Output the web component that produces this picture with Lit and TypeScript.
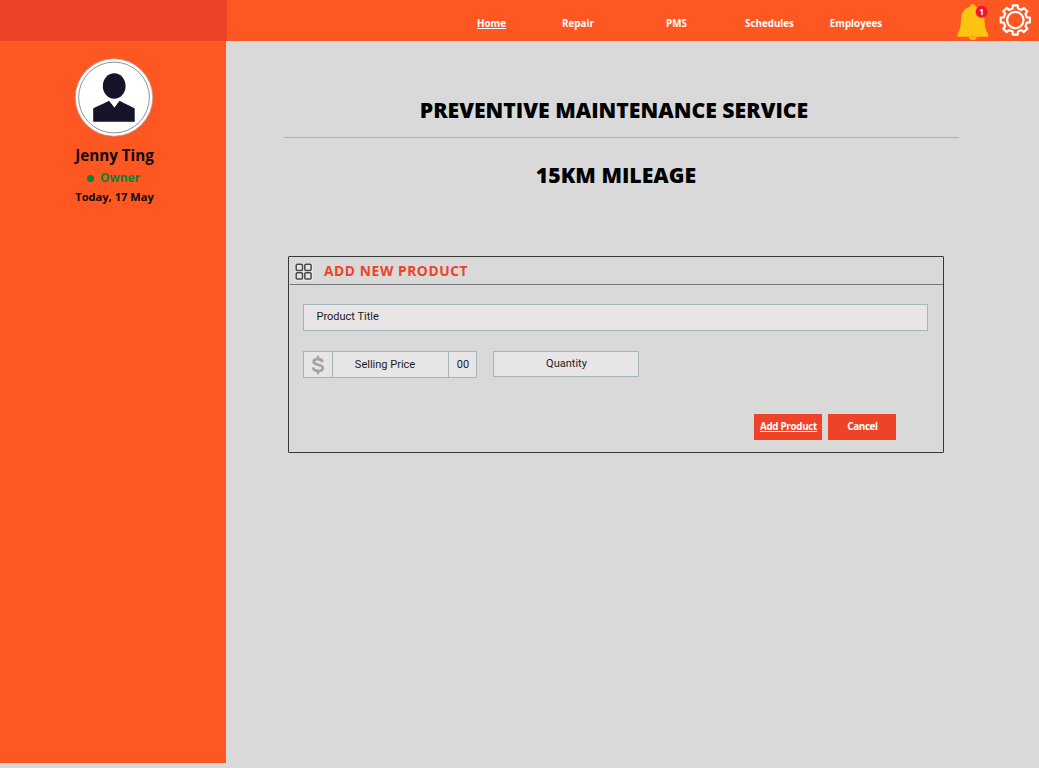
import { LitElement, html, svg, css } from "lit";
import { customElement, state } from "lit/decorators.js";
import { classMap } from "lit/directives/class-map.js";

const gearPath = (teeth: number, outer: number, root: number): string => {
  const step = (Math.PI * 2) / teeth;
  const points: string[] = [];
  for (let i = 0; i < teeth; i++) {
    const a = i * step - Math.PI / 2;
    for (const [offset, r] of [[-0.29, root], [-0.21, outer], [0.21, outer], [0.29, root]]) {
      const t = a + offset * step;
      points.push(`${(r * Math.cos(t)).toFixed(2)} ${(r * Math.sin(t)).toFixed(2)}`);
    }
  }
  return `M${points.join("L")}Z`;
};

@customElement("top-bar")
class TopBar extends LitElement {
  @state() private active = "Home";

  static styles = css`
    :host { display: flex; height: 41px; background: #ff5722; }
    .brand { width: 227px; background: #ee4326; border-right: 1px solid #f9592f; flex: none; }
    .nav {
      display: grid; grid-template-columns: 87px 86px 111px 75px 98px;
      margin-left: 220px; width: 457px; flex: none;
    }
    .link {
      text-align: center; color: #fff; font-weight: 700; font-size: 9.8px;
      line-height: 14px; padding-top: 17px; cursor: pointer;
    }
    .active { text-decoration: underline; }
    .icons { flex: none; width: 134px; height: 41px; display: block; }
    .count { font: 700 9px "Open Sans", sans-serif; fill: #fff; text-anchor: middle; }
  `;

  render() {
    return html`
      <div class="brand"></div>
      <nav class="nav">
        ${["Home", "Repair", "PMS", "Schedules", "Employees"].map(
          (name) => html`<a
            class=${classMap({ link: true, active: name === this.active })}
            @click=${() => (this.active = name)}
            >${name}</a
          >`
        )}
      </nav>
      <svg class="icons" viewBox="905 0 134 41">
        <path
          fill="#ffc412"
          d="M972.8 4.3c1.8 0 2.7 1.2 2.9 2.4 5.2 1.5 8.2 5.8 8.6 11.2.4 6 .4 10.8 2.6 14 1 1.4 1.3 2.600 1.2 4.900H957.300c-.1-2.300.3-3.500 1.200-4.900 2.200-3.200 2.200-8 2.600-14 .4-5.400 3.500-9.700 8.800-11.200.2-1.200 1.100-2.400 2.900-2.400Z"
        />
        <path fill="#ffc412" d="M968.800 37.200h8c-.4 1.700-2 2.900-4 2.900s-3.600-1.200-4-2.900Z" />
        <circle cx="981.600" cy="11.700" r="6" fill="#fb1031" />
        <text class="count" x="981.600" y="15">1</text>
        <g transform="translate(1015.300 20)" fill="none" stroke="#fff" stroke-width="2.200" stroke-linejoin="round">
          <path d=${gearPath(8, 14.8, 11.9)} />
          <circle r="8.200" />
        </g>
      </svg>
    `;
  }
}

@customElement("side-profile")
class SideProfile extends LitElement {
  static styles = css`
    :host {
      display: flex; flex-direction: column; align-items: center; box-sizing: border-box;
      width: 226px; height: 722px; flex: none; background: #ff5722; padding: 17px 0 0 3px;
      font-weight: 700; color: #0a0a0a;
    }
    .avatar { width: 80px; height: 80px; display: block; margin-right: 1px; }
    .name { font-size: 15.2px; line-height: 20px; margin-top: 7px; }
    .role {
      display: flex; align-items: center; gap: 6px; color: #0b8235;
      font-size: 12px; line-height: 16px; margin: 5px 2px 0 0;
    }
    .dot { width: 7px; height: 7px; border-radius: 50%; background: #0b8235; }
    .date { font-size: 11.1px; line-height: 15px; margin-top: 3px; }
  `;

  render() {
    return html`
      <svg class="avatar" viewBox="0 0 80 80">
        <circle cx="40" cy="39.500" r="38.700" fill="#fff" stroke="#b9a59e" stroke-width=".7" />
        <circle cx="40" cy="39.500" r="35.400" fill="none" stroke="#77777c" stroke-width=".8" />
        <g fill="#17142a">
          <ellipse cx="40.200" cy="28" rx="11.400" ry="12.800" />
          <path d="M19.200 63.700V50.500c2.500-1.500 11-4.900 15.800-7.700l5.400 6.700 5.200-6.700c4.900 2.800 12.500 6 15.100 7.700v13.200Z" />
        </g>
        <path d="m36.500 42.500 4 7 3.500-7-3.500-.8Z" fill="#fff" />
      </svg>
      <div class="name">Jenny Ting</div>
      <div class="role"><span class="dot"></span>Owner</div>
      <div class="date">Today, 17 May</div>
    `;
  }
}

@customElement("product-form")
class ProductForm extends LitElement {
  static styles = css`
    :host {
      display: block; box-sizing: border-box; width: 656px; height: 197px;
      margin: 66px 0 0 62px; border: 1px solid #383838; border-radius: 1px;
    }
    .head {
      display: flex; align-items: center; height: 27px; padding-left: 5px;
      border-bottom: 1px solid #777; margin-left: 1px;
    }
    .grid { width: 18px; height: 18px; display: block; margin-top: 2px; }
    .title {
      margin-left: 11px; color: #ee4326; font-size: 13.8px; font-weight: 700;
      line-height: 18px; white-space: nowrap; letter-spacing: 0.57px;
    }
    .field {
      box-sizing: border-box; height: 27px; border: 1px solid #a4b4ba; background: #e7e5e6;
      color: #1c1c1c; font: 11px/15px Roboto, sans-serif; white-space: nowrap;
    }
    .name { margin: 19px 0 0 14px; width: 625px; padding: 4px 0 0 12.5px; }
    .row { display: flex; margin: 20px 0 0 14px; }
    .price { display: flex; width: 174px; }
    .cell { display: flex; align-items: center; justify-content: center; box-sizing: border-box; }
    .currency { width: 28px; padding-right: 1px; }
    .amount { width: 117px; padding-right: 11px; border: solid #a4b4ba; border-width: 0 1px; }
    .cents { width: 27px; padding-left: 1px; }
    .quantity { width: 146px; height: 26px; margin-left: 16px; text-align: center; padding: 4px 0 0 1px; }
    .dollar { width: 14px; height: 20px; display: block; }
    .actions { display: flex; gap: 6px; margin: 36px 0 0 465px; }
    .button {
      width: 68px; height: 26px; border: 0; padding: 0 0 0 1px; background: #ee4326; color: #fff;
      font: 700 9.8px/26px "Open Sans", sans-serif; letter-spacing: -0.3px; white-space: nowrap;
    }
    .primary { text-decoration: underline; }
  `;

  render() {
    return html`
      <div class="head">
        <svg class="grid" viewBox="0 0 18 18">
          <rect width="18" height="18" fill="#ebebeb" />
          ${[[1.2, 1.2], [9.8, 1.2], [1.2, 9.8], [9.8, 9.8]].map(
            ([x, y]) => svg`<rect x=${x} y=${y} width="6.300" height="6.300" rx="1" fill="#e2e2e2" stroke="#484848" stroke-width="1.500" />`
          )}
        </svg>
        <span class="title">ADD NEW PRODUCT</span>
      </div>
      <div class="field name">Product Title</div>
      <div class="row">
        <div class="field price">
          <span class="cell currency">
            <svg class="dollar" viewBox="0 0 14 20" fill="none" stroke="#a3a3a3">
              <path stroke-width="2.700" d="M11.500 7.200C11.200 5.100 9.500 4.100 7 4.100c-2.600 0-4.300 1-4.300 2.700C2.700 8.700 4.600 9.200 7 9.700c2.700.6 4.800 1.200 4.800 3.200 0 1.900-1.800 2.900-4.700 2.900-2.800 0-4.700-1.200-4.900-3.400" />
              <path stroke-width="2.400" d="M7 .8v4M7 15.200v4" />
            </svg>
          </span>
          <span class="cell amount">Selling Price</span>
          <span class="cell cents">00</span>
        </div>
        <div class="field quantity">Quantity</div>
      </div>
      <div class="actions">
        <button class="button primary">Add Product</button>
        <button class="button">Cancel</button>
      </div>
    `;
  }
}

@customElement("app-root")
class AppRoot extends LitElement {
  static styles = css`
    :host {
      display: block; height: 768px; overflow: hidden; background: #d9d9d9;
      font-family: "Open Sans", sans-serif;
    }
    .body { display: flex; }
    .main { width: 813px; }
    .heading {
      margin: 0; text-align: center; color: #000; font-weight: 800; font-size: 21.25px;
      line-height: 30px; white-space: nowrap;
    }
    .service { margin: 54px 37px 0 0; }
    .rule { width: 675px; height: 1px; background: #b0b0b0; margin: 12px 0 0 58px; }
    .mileage { margin: 22px 33px 0 0; }
  `;

  render() {
    return html`
      <top-bar></top-bar>
      <div class="body">
        <side-profile></side-profile>
        <main class="main">
          <h1 class="heading service">PREVENTIVE MAINTENANCE SERVICE</h1>
          <div class="rule"></div>
          <h2 class="heading mileage">15KM MILEAGE</h2>
          <product-form></product-form>
        </main>
      </div>
    `;
  }
}
